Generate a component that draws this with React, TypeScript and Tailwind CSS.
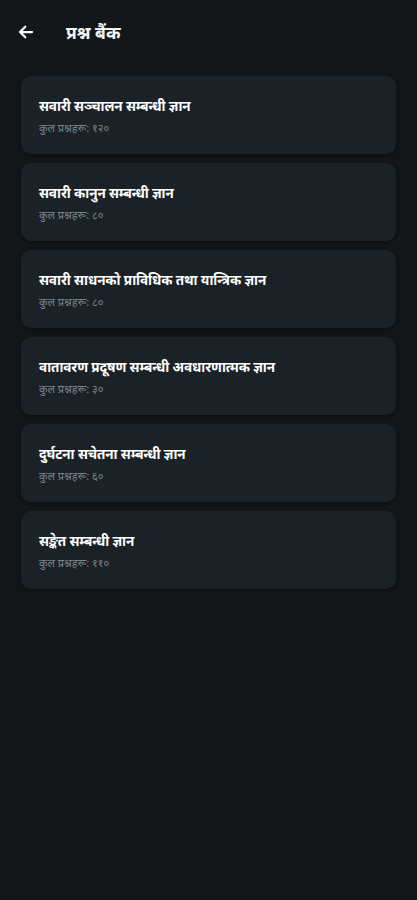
import React from "react";

const items = [
  { title: "सवारी सञ्चालन सम्बन्धी ज्ञान", count: "१२०" },
  { title: "सवारी कानुन सम्बन्धी ज्ञान", count: "८०" },
  { title: "सवारी साधनको प्राविधिक तथा यान्त्रिक ज्ञान", count: "८०" },
  { title: "वातावरण प्रदूषण सम्बन्धी अवधारणात्मक ज्ञान", count: "३०" },
  { title: "दुर्घटना सचेतना सम्बन्धी ज्ञान", count: "६०" },
  { title: "सङ्केत सम्बन्धी ज्ञान", count: "११०" },
];

export default function App() {
  return (
    <div
      className="w-[417px] h-[900px] bg-[#121619] text-white"
      style={{ fontFamily: '"Noto Sans", "Noto Sans Devanagari", "DejaVu Sans", sans-serif' }}
    >
      <div className="h-[64px] flex items-center pl-[17px]">
        <svg width="18" height="18" viewBox="0 0 24 24" fill="none" stroke="#ffffff" strokeWidth="3" strokeLinecap="round" strokeLinejoin="round">
          <path d="M20 12H5" />
          <path d="M11 5l-7 7 7 7" />
        </svg>
        <span className="ml-[31px] text-[17.5px] font-bold text-[#f4f4f4]">प्रश्न बैंक</span>
      </div>
      <div className="flex flex-col gap-[9px] px-[21px] pt-[12px]">
        {items.map((it) => (
          <div
            key={it.title}
            className="h-[78px] rounded-[10px] bg-[#1a2228] pl-[18px] pt-[19px] shadow-[0_2px_4px_rgba(0,0,0,0.35)]"
          >
            <div className="text-[13.5px] font-bold leading-[22px] text-white tracking-[-0.1px]">{it.title}</div>
            <div className="mt-[4px] text-[11px] leading-[14px] text-[#7b858c]">कुल प्रश्नहरू: {it.count}</div>
          </div>
        ))}
      </div>
    </div>
  );
}
